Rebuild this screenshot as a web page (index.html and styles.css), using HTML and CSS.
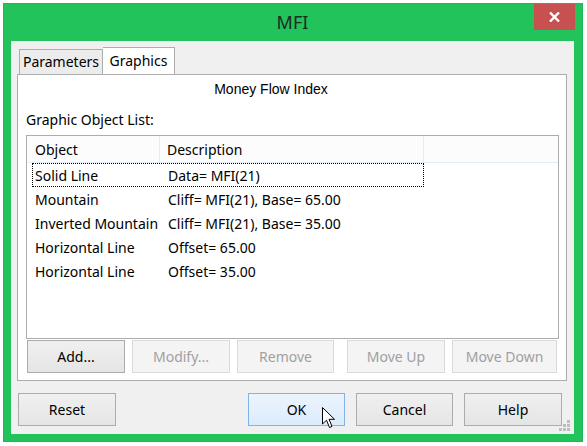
FILE: index.html
```html
<!DOCTYPE html>
<html lang="en">
<head>
  <meta charset="UTF-8">
  <title>MFI</title>
  <link rel="stylesheet" href="styles.css">
</head>
<body>
  <div class="window">
    <!-- TITLE BAR -->
    <div class="title-bar">
      <span></span>
      <span class="title">MFI</span>
      <button class="close-btn">
        <svg width="11" height="10" viewBox="0 0 11 10">
          <path d="M1 0.5 L10 9.5 M10 0.5 L1 9.5" stroke="#fff" stroke-width="2.4" fill="none"/>
        </svg>
      </button>
    </div>

    <div class="client">
      <!-- TABS -->
      <div class="tabs">
        <div class="tab tab-params">Parameters</div>
        <div class="tab tab-graphics active">Graphics</div>
      </div>

      <div class="tab-panel">
        <div class="indicator-name">Money Flow Index</div>
        <div class="list-label">Graphic Object List:</div>

        <!-- LIST VIEW -->
        <div class="list-view">
          <div class="list-header">
            <div class="col-head head-object">Object</div>
            <div class="col-head head-desc">Description</div>
            <div class="col-head head-fill"></div>
          </div>
          <div class="list-row focused">
            <div class="cell cell-object">Solid Line</div>
            <div class="cell">Data= MFI(21)</div>
          </div>
          <div class="list-row">
            <div class="cell cell-object">Mountain</div>
            <div class="cell">Cliff= MFI(21), Base= 65.00</div>
          </div>
          <div class="list-row">
            <div class="cell cell-object">Inverted Mountain</div>
            <div class="cell">Cliff= MFI(21), Base= 35.00</div>
          </div>
          <div class="list-row">
            <div class="cell cell-object">Horizontal Line</div>
            <div class="cell">Offset= 65.00</div>
          </div>
          <div class="list-row">
            <div class="cell cell-object">Horizontal Line</div>
            <div class="cell">Offset= 35.00</div>
          </div>
        </div>

        <div class="list-buttons">
          <button class="btn btn-add">Add...</button>
          <button class="btn btn-modify" disabled>Modify...</button>
          <button class="btn btn-remove" disabled>Remove</button>
          <button class="btn btn-up" disabled>Move Up</button>
          <button class="btn btn-down" disabled>Move Down</button>
        </div>
      </div>

      <!-- DIALOG BUTTONS -->
      <div class="dialog-buttons">
        <button class="btn btn-reset">Reset</button>
        <button class="btn btn-ok default">OK</button>
        <button class="btn btn-cancel">Cancel</button>
        <button class="btn btn-help">Help</button>
      </div>

      <svg class="grip" width="12" height="12" viewBox="0 0 12 12">
        <rect x="8" y="0" width="3" height="3" fill="#bdbdbd"/>
        <rect x="4" y="4" width="3" height="3" fill="#bdbdbd"/>
        <rect x="8" y="4" width="3" height="3" fill="#bdbdbd"/>
        <rect x="0" y="8" width="3" height="3" fill="#bdbdbd"/>
        <rect x="4" y="8" width="3" height="3" fill="#bdbdbd"/>
        <rect x="8" y="8" width="3" height="3" fill="#bdbdbd"/>
      </svg>

      <svg class="cursor" width="14" height="22" viewBox="0 0 14 22">
        <path d="M0.5 0.5 L0.5 17 L4.5 13.2 L7.5 20.5 L10 19.4 L7 12.3 L12.5 12.3 Z" fill="#fff" stroke="#000" stroke-width="1"/>
      </svg>
    </div>
  </div>
</body>
</html>
```

FILE: styles.css
```css
/* VARIABLES */
:root {
  --frame-color: #21c35a;
  --client-bg: #f0f0f0;
  --border-color: #adadad;
  --text-color: #000;
  --disabled-text: #a0a0a0;
  --font-family: "Noto Sans", sans-serif;
}

* {
  box-sizing: border-box;
  margin: 0;
  padding: 0;
}

body {
  background: #fff;
  font-family: var(--font-family);
  font-size: 14px;
  color: var(--text-color);
}

/* WINDOW FRAME */
.window {
  margin: 3px 0 0 3px;
  width: 580px;
  height: 439px;
  background: var(--frame-color);
  border: 1px solid #1fb955;
  padding: 0 8px 7px 7px;
  display: flex;
  flex-direction: column;
}

.title-bar {
  height: 37px;
  display: grid;
  grid-template-columns: 1fr auto 1fr;
  align-items: start;
}

.title {
  font-size: 18px;
  line-height: 24px;
  margin-top: 6px;
  color: #1e2a22;
}

.close-btn {
  justify-self: end;
  width: 41px;
  height: 26px;
  margin: 0 -1px 0 0;
  background: #c75050;
  border: none;
  display: flex;
  align-items: center;
  justify-content: center;
}

/* CLIENT AREA */
.client {
  position: relative;
  flex: 1;
  background: var(--client-bg);
  padding: 6px 7px 0 6px;
}

.tabs {
  display: flex;
  align-items: flex-end;
  height: 27px;
  padding-left: 2px;
}

.tab {
  height: 25px;
  line-height: 24px;
  text-align: center;
  background: #ececec;
  border: 1px solid var(--border-color);
  border-bottom: none;
  white-space: nowrap;
}

.tab-params {
  width: 84px;
}

.tab-graphics {
  width: 72px;
}

.tab.active {
  height: 27px;
  line-height: 25px;
  background: #fff;
  border-left: none;
}

.tab-panel {
  height: 307px;
  background: #fff;
  border: 1px solid var(--border-color);
  padding: 0 7px 0 8px;
}

.indicator-name {
  font-family: "Liberation Sans", Arial, sans-serif;
  font-size: 14px;
  line-height: 20px;
  margin-top: 4px;
  width: 490px;
  text-align: center;
}

.list-label {
  line-height: 20px;
  margin-top: 11px;
}

/* LIST VIEW */
.list-view {
  margin-top: 5px;
  height: 204px;
  border: 1px solid #acacac;
}

.list-header {
  display: flex;
  height: 27px;
  background: #fcfcfc;
  border-bottom: 1px solid #e3edf9;
}

.col-head {
  line-height: 27px;
  border-right: 1px solid #e3edf9;
}

.head-object {
  width: 133px;
  padding-left: 8px;
}

.head-desc {
  width: 264px;
  padding-left: 7px;
}

.head-fill {
  flex: 1;
  border-right: none;
}

.list-row {
  display: flex;
  height: 24px;
  width: 392px;
  margin-left: 5px;
  line-height: 23px;
  border: 1px solid transparent;
}

.list-row.focused {
  border: 1px dotted #000;
}

.cell {
  padding-left: 2px;
  white-space: nowrap;
}

.cell-object {
  width: 133px;
}

/* BUTTONS */
.btn {
  height: 33px;
  font-family: var(--font-family);
  font-size: 14px;
  color: var(--text-color);
  background: linear-gradient(#f0f0f0, #e5e5e5);
  border: 1px solid #acacac;
}

.btn:disabled {
  color: var(--disabled-text);
  background: #f4f4f4;
  border-color: #dadada;
}

.btn.default {
  background: linear-gradient(#ecf4fc, #dcecfc);
  border-color: #7eb4ea;
}

.list-buttons {
  display: flex;
  margin-top: 1px;
}

.btn-add { width: 98px; margin-left: 1px; }
.btn-modify { width: 98px; margin-left: 7px; }
.btn-remove { width: 97px; margin-left: 7px; }
.btn-up { width: 98px; margin-left: 13px; }
.btn-down { width: 105px; margin-left: 7px; }

.dialog-buttons {
  display: flex;
  margin-top: 12px;
  padding-left: 1px;
}

.btn-reset { width: 98px; }
.btn-ok { width: 97px; margin-left: 132px; }
.btn-cancel { width: 97px; margin-left: 11px; }
.btn-help { width: 98px; margin-left: 11px; }

/* OVERLAYS */
.grip {
  position: absolute;
  right: 3px;
  bottom: 2px;
}

.cursor {
  position: absolute;
  left: 311px;
  top: 366px;
}
```
